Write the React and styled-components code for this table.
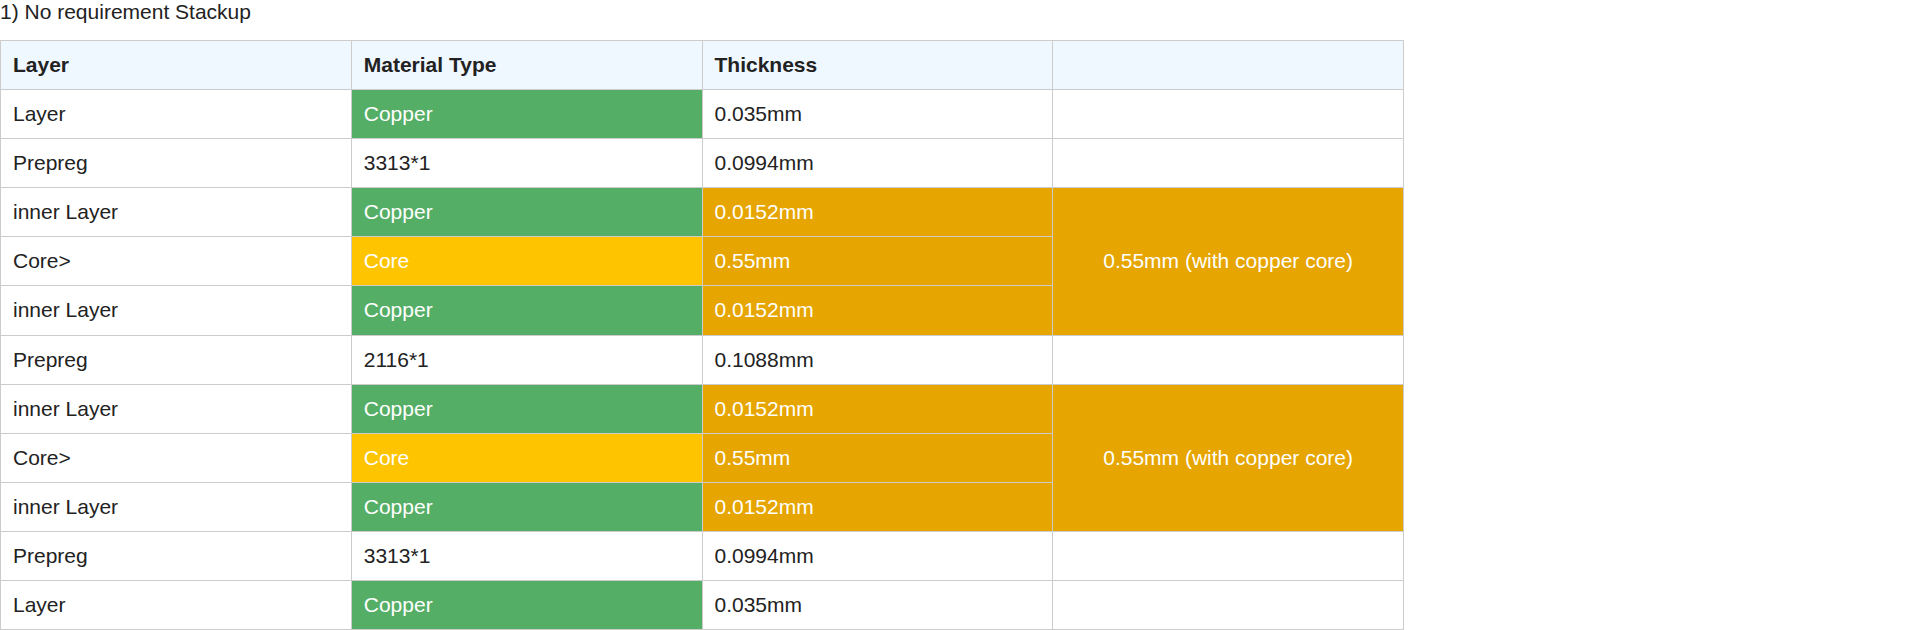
import React from "react";
import styled, { createGlobalStyle } from "styled-components";

const Global = createGlobalStyle`
  html, body { margin: 0; padding: 0; background: #fff; }
  body { font-family: "Liberation Sans", Arial, sans-serif; color: #222; }
`;

const Page = styled.div`
  display: flex;
  flex-direction: column;
  align-items: flex-start;
`;

const Title = styled.div`
  font-size: 21px;
  line-height: 24px;
  margin-bottom: 16px;
  color: #222;
`;

const Table = styled.table`
  width: 1404px;
  border-collapse: collapse;
  table-layout: fixed;
  font-size: 21px;
  line-height: 24.1px;
`;

const Th = styled.th`
  background: #f0f8ff;
  border: 1px solid #cccccc;
  padding: 12px;
  text-align: left;
  font-weight: bold;
  color: #222;
`;

const tones = {
  plain: { bg: "#ffffff", fg: "#222222" },
  copper: { bg: "#55ae66", fg: "#ffffff" },
  core: { bg: "#ffc400", fg: "#ffffff" },
  amber: { bg: "#e6a500", fg: "#ffffff" },
};

const Td = styled.td`
  border: 1px solid #cccccc;
  padding: 12px;
  text-align: ${(p) => (p.$center ? "center" : "left")};
  background: ${(p) => tones[p.$tone || "plain"].bg};
  color: ${(p) => tones[p.$tone || "plain"].fg};
  white-space: nowrap;
`;

const rows = [
  { layer: "Layer", mat: "Copper", mt: "copper", th: "0.035mm", tt: "plain", extra: "empty" },
  { layer: "Prepreg", mat: "3313*1", mt: "plain", th: "0.0994mm", tt: "plain", extra: "empty" },
  { layer: "inner Layer", mat: "Copper", mt: "copper", th: "0.0152mm", tt: "amber", extra: "span" },
  { layer: "Core>", mat: "Core", mt: "core", th: "0.55mm", tt: "amber", extra: "none" },
  { layer: "inner Layer", mat: "Copper", mt: "copper", th: "0.0152mm", tt: "amber", extra: "none" },
  { layer: "Prepreg", mat: "2116*1", mt: "plain", th: "0.1088mm", tt: "plain", extra: "empty" },
  { layer: "inner Layer", mat: "Copper", mt: "copper", th: "0.0152mm", tt: "amber", extra: "span" },
  { layer: "Core>", mat: "Core", mt: "core", th: "0.55mm", tt: "amber", extra: "none" },
  { layer: "inner Layer", mat: "Copper", mt: "copper", th: "0.0152mm", tt: "amber", extra: "none" },
  { layer: "Prepreg", mat: "3313*1", mt: "plain", th: "0.0994mm", tt: "plain", extra: "empty" },
  { layer: "Layer", mat: "Copper", mt: "copper", th: "0.035mm", tt: "plain", extra: "empty" },
];

export default function App() {
  return (
    <Page>
      <Global />
      <Title>1) No requirement Stackup</Title>
      <Table>
        <thead>
          <tr>
            <Th>Layer</Th>
            <Th>Material Type</Th>
            <Th>Thickness</Th>
            <Th></Th>
          </tr>
        </thead>
        <tbody>
          {rows.map((r, i) => (
            <tr key={i}>
              <Td>{r.layer}</Td>
              <Td $tone={r.mt}>{r.mat}</Td>
              <Td $tone={r.tt}>{r.th}</Td>
              {r.extra === "empty" && <Td></Td>}
              {r.extra === "span" && (
                <Td rowSpan={3} $tone="amber" $center>
                  0.55mm (with copper core)
                </Td>
              )}
            </tr>
          ))}
        </tbody>
      </Table>
    </Page>
  );
}
